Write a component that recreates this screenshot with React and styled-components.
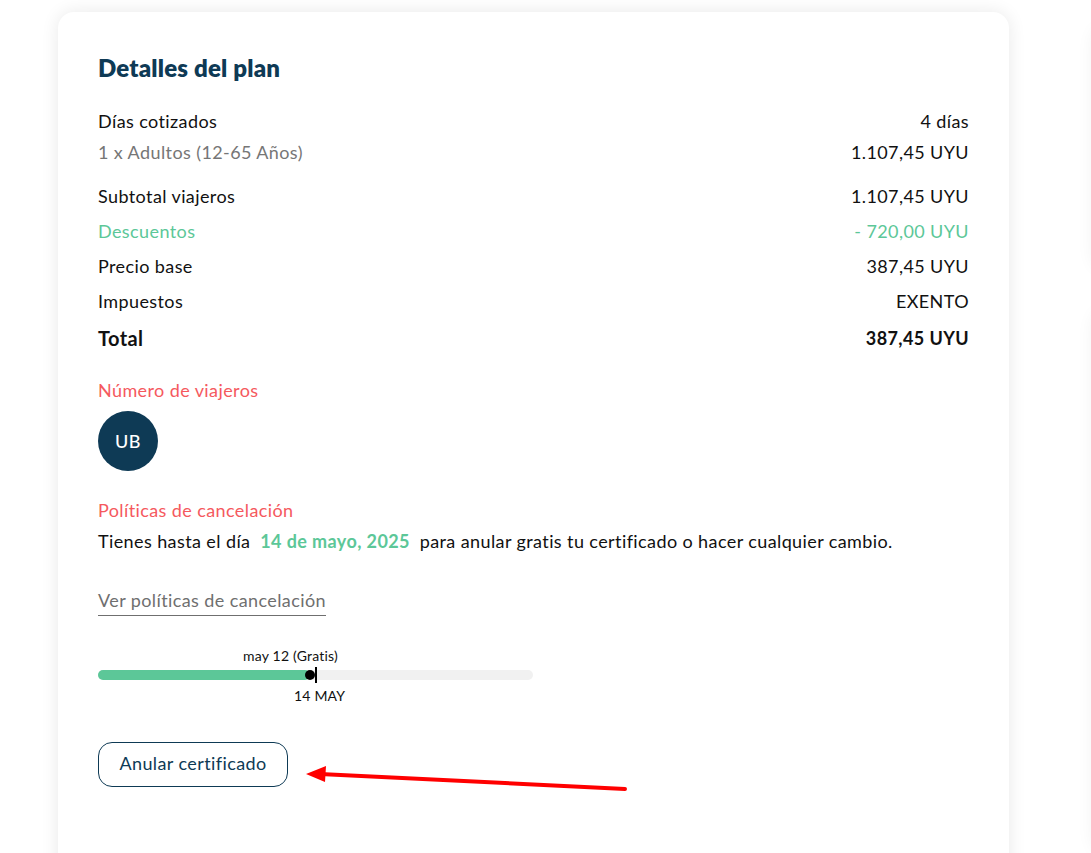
import React from 'react'
import styled, { createGlobalStyle } from 'styled-components'

const GlobalStyle = createGlobalStyle`
  html, body {
    margin: 0;
    padding: 0;
    background: #ffffff;
  }
  body {
    font-family: Lato, "Noto Sans", sans-serif;
    letter-spacing: 0.4px;
    color: #111111;
    overflow: hidden;
  }
`

const navy = '#0e3a55'
const green = '#5cc798'
const coral = '#f5595e'

const Page = styled.div`
  position: relative;
  display: flex;
  gap: 84px;
  padding: 12px 0 0 58px;
  width: 1091px;
  height: 853px;
  box-sizing: border-box;
  overflow: hidden;
`

const Card = styled.div`
  flex-shrink: 0;
  width: 951px;
  min-height: 900px;
  box-sizing: border-box;
  padding: 41px 40px 40px;
  background: #fff;
  border-radius: 16px;
  box-shadow: 0 0 18px rgba(0, 0, 0, 0.09);
`

const SideColumn = styled.div`
  display: flex;
  flex-direction: column;
  gap: 40px;
  padding-top: 14px;
`

const SideCard = styled.div`
  width: 300px;
  height: ${p => p.h}px;
  background: #fff;
  border-radius: 16px;
  box-shadow: 0 0 18px rgba(0, 0, 0, 0.06);
`

const Title = styled.h2`
  margin: 0 0 22px;
  font-size: 24px;
  line-height: 30px;
  font-weight: 800;
  letter-spacing: 0.2px;
  color: ${navy};
`

const Group = styled.div`
  margin-bottom: ${p => p.mb || 0}px;
`

const Row = styled.div`
  display: flex;
  justify-content: space-between;
  align-items: center;
  height: ${p => p.h || 35}px;
  font-size: ${p => (p.big ? 20 : 18)}px;
  font-weight: ${p => (p.big ? 700 : 400)};
  color: ${p => p.color || '#111'};
`

const Value = styled.span`
  font-size: 18px;
  font-weight: ${p => (p.bold ? 700 : 400)};
  color: ${p => p.color || '#111'};
`

const SectionLabel = styled.div`
  font-size: 18px;
  line-height: 26px;
  color: ${coral};
  margin-top: ${p => p.mt || 0}px;
`

const Avatar = styled.div`
  width: 60px;
  height: 60px;
  margin-top: 8px;
  border-radius: 50%;
  background: ${navy};
  color: #fff;
  display: flex;
  align-items: center;
  justify-content: center;
  font-size: 18px;
  font-weight: 500;
`

const Sentence = styled.p`
  margin: 5px 0 0;
  font-size: 18px;
  line-height: 26px;
  color: #111;
`

const DateHighlight = styled.strong`
  color: ${green};
  font-weight: 700;
  margin: 0 5px;
`

const PolicyLink = styled.a`
  display: inline-block;
  margin-top: 33px;
  font-size: 18px;
  line-height: 26px;
  color: #6f6f6f;
  text-decoration: none;
  border-bottom: 1px solid #6f6f6f;
  padding-bottom: 2px;
  cursor: pointer;
`

const Timeline = styled.div`
  width: 435px;
  margin-top: 31px;
  font-size: 14px;
  line-height: 18px;
  letter-spacing: 0.2px;
  color: #111;
`

const TimelineLabel = styled.div`
  padding-left: ${p => p.offset}px;
`

const Track = styled.div`
  position: relative;
  height: 10px;
  margin: 5px 0 7px;
  border-radius: 5px;
  background: #f1f1f1;
`

const Fill = styled.div`
  height: 100%;
  border-radius: 5px;
  background: ${green};
`

const Dot = styled.span`
  position: absolute;
  top: 0;
  width: 10px;
  height: 10px;
  margin-left: -5px;
  border-radius: 50%;
  background: #000;
`

const Tick = styled.span`
  position: absolute;
  top: -3px;
  width: 1.5px;
  height: 16px;
  background: #000;
`

const CancelButton = styled.button`
  margin-top: 37px;
  width: 190px;
  height: 45px;
  padding: 0 0 3px;
  border: 1px solid ${navy};
  border-radius: 14px;
  background: #fff;
  color: ${navy};
  font-family: inherit;
  letter-spacing: 0.4px;
  font-size: 18px;
  cursor: pointer;
`

const Arrow = styled.svg`
  position: absolute;
  left: 0;
  top: 0;
  pointer-events: none;
`

const App = () => {
  const fillPct = 48.7
  return (
    <>
      <GlobalStyle />
      <Page>
        <Card>
          <Title>Detalles del plan</Title>
          <Group mb={11}>
            <Row h={31}>
              <span>Días cotizados</span>
              <Value>4 días</Value>
            </Row>
            <Row h={31} color="#767676">
              <span>1 x Adultos (12-65 Años)</span>
              <Value>1.107,45 UYU</Value>
            </Row>
          </Group>
          <Group>
            <Row>
              <span>Subtotal viajeros</span>
              <Value>1.107,45 UYU</Value>
            </Row>
            <Row color={green}>
              <span>Descuentos</span>
              <Value color={green}>- 720,00 UYU</Value>
            </Row>
            <Row>
              <span>Precio base</span>
              <Value>387,45 UYU</Value>
            </Row>
            <Row>
              <span>Impuestos</span>
              <Value>EXENTO</Value>
            </Row>
            <Row h={39} big>
              <span>Total</span>
              <Value bold>387,45 UYU</Value>
            </Row>
          </Group>

          <SectionLabel mt={20}>Número de viajeros</SectionLabel>
          <Avatar>UB</Avatar>

          <SectionLabel mt={26}>Políticas de cancelación</SectionLabel>
          <Sentence>
            Tienes hasta el día<DateHighlight> 14 de mayo, 2025 </DateHighlight>para anular gratis tu certificado o hacer cualquier cambio.
          </Sentence>

          <PolicyLink>Ver políticas de cancelación</PolicyLink>

          <Timeline>
            <TimelineLabel offset={145}>may 12 (Gratis)</TimelineLabel>
            <Track>
              <Fill style={{ width: `${fillPct}%` }} />
              <Dot style={{ left: `${fillPct}%` }} />
              <Tick style={{ left: '217px' }} />
            </Track>
            <TimelineLabel offset={196}>14 MAY</TimelineLabel>
          </Timeline>

          <CancelButton>Anular certificado</CancelButton>
        </Card>

        <SideColumn>
          <SideCard h={270} />
          <SideCard h={600} />
        </SideColumn>

        <Arrow width="1091" height="853" viewBox="0 0 1091 853">
          <line x1="625" y1="789" x2="320" y2="774" stroke="#ff0000" strokeWidth="4" strokeLinecap="round" />
          <polygon points="306,774 326,766 325,782" fill="#ff0000" />
        </Arrow>
      </Page>
    </>
  )
}

export default App
